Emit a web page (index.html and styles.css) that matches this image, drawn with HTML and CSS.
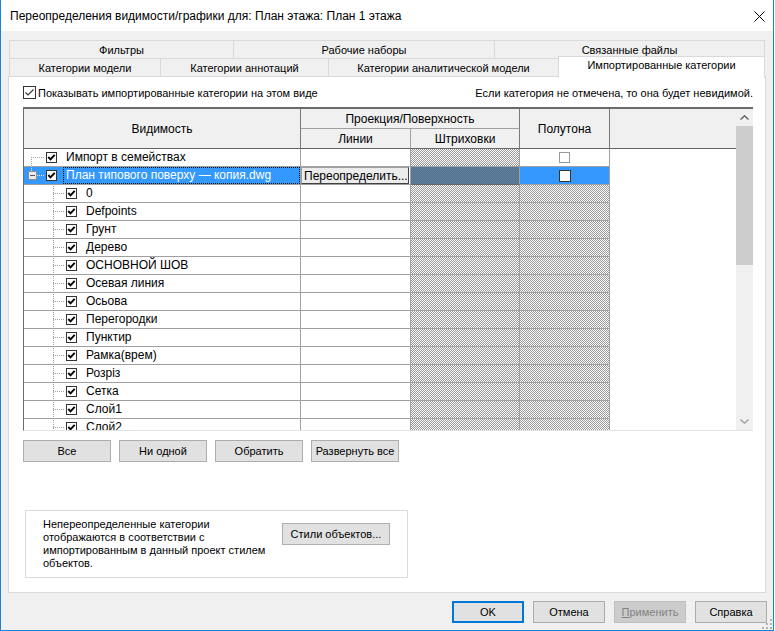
FILE: index.html
```html
<!DOCTYPE html>
<html lang="ru">
<head>
<meta charset="utf-8">
<title>Переопределения видимости/графики</title>
<link rel="stylesheet" href="styles.css">
</head>
<body>
<div class="window">
  <div class="titlebar">
    <span class="title">Переопределения видимости/графики для: План этажа: План 1 этажа</span>
    <span class="close"><svg width="11" height="11" viewBox="0 0 11 11"><path d="M0.5 0.5 L10.5 10.5 M10.5 0.5 L0.5 10.5" stroke="#000" stroke-width="1"/></svg></span>
  </div>
  <div class="client">
    <div class="tabs">
      <div class="tabrow">
        <div class="tab w1">Фильтры</div>
        <div class="tab w2">Рабочие наборы</div>
        <div class="tab w3">Связанные файлы</div>
      </div>
      <div class="tabrow front">
        <div class="tab w4">Категории модели</div>
        <div class="tab w5">Категории аннотаций</div>
        <div class="tab w6">Категории аналитической модели</div>
        <div class="tab w7 sel">Импортированные категории</div>
      </div>
    </div>
    <div class="panel">
      <div class="topline">
        <label class="showlabel"><svg class="chk13" viewBox="0 0 13 13"><rect x="0.5" y="0.5" width="12" height="12" fill="#fff" stroke="#333"/><path d="M2.5 6.5 L5 9 L10.5 3.5" fill="none" stroke="#333" stroke-width="1.1"/></svg><span>Показывать импортированные категории на этом виде</span></label>
        <span>Если категория не отмечена, то она будет невидимой.</span>
      </div>
      <div class="gridwrap">
        <div class="grid">
          <div class="h hvis">Видимость</div>
          <div class="h hproj">Проекция/Поверхность</div>
          <div class="h hhalf">Полутона</div>
          <div class="h hblank"></div>
          <div class="h hlines">Линии</div>
          <div class="h hhatch">Штриховки</div>

          <!-- row 1 -->
          <div class="c vis"><svg class="tree r" viewBox="0 0 22 17"><path d="M7.5 8 V18 M7 8.5 H20" stroke="#a0a0a0" stroke-dasharray="1 1" fill="none"/></svg><svg class="cb" viewBox="0 0 11 11"><rect x="0.5" y="0.5" width="10" height="10" fill="#fff" stroke="#333"/><path d="M2.3 5 L4.5 7.3 L8.7 2.8" fill="none" stroke="#000" stroke-width="1.9"/></svg><span class="lbl">Импорт в семействах</span></div>
          <div class="c"></div>
          <div class="c hatch"></div>
          <div class="c half"><span class="hcb"></span></div>
          <div class="c blank"></div>

          <!-- row 2 selected -->
          <div class="c vis sel"><svg class="tree r" viewBox="0 0 22 17"><path d="M7.5 -1 V4 M13 8.5 H20" stroke="#e6e6e6" stroke-dasharray="1 1" fill="none"/><rect x="4.5" y="4.5" width="8" height="8" fill="#e9e9e9" stroke="#8c8c8c"/><path d="M6 8.5 H11" stroke="#555"/></svg><svg class="cb" viewBox="0 0 11 11"><rect x="0.5" y="0.5" width="10" height="10" fill="#fff" stroke="#333"/><path d="M2.3 5 L4.5 7.3 L8.7 2.8" fill="none" stroke="#000" stroke-width="1.9"/></svg><span class="lbl focus">План типового поверху — копия.dwg</span></div>
          <div class="c ovr"><button class="override">Переопределить...</button></div>
          <div class="c hatch selhatch"></div>
          <div class="c half sel"><span class="hcb big"></span></div>
          <div class="c blank"></div>

          <div class="c vis"><svg class="tree ch" viewBox="0 0 42 17"><path d="M29.5 -1 V18 M29 8.5 H40" stroke="#a0a0a0" stroke-dasharray="1 1" fill="none"/></svg><svg class="cb" viewBox="0 0 11 11"><rect x="0.5" y="0.5" width="10" height="10" fill="#fff" stroke="#333"/><path d="M2.3 5 L4.5 7.3 L8.7 2.8" fill="none" stroke="#000" stroke-width="1.9"/></svg><span class="lbl">0</span></div>
          <div class="c"></div><div class="c hatch"></div><div class="c hatch"></div><div class="c blank"></div>

          <div class="c vis"><svg class="tree ch" viewBox="0 0 42 17"><path d="M29.5 -1 V18 M29 8.5 H40" stroke="#a0a0a0" stroke-dasharray="1 1" fill="none"/></svg><svg class="cb" viewBox="0 0 11 11"><rect x="0.5" y="0.5" width="10" height="10" fill="#fff" stroke="#333"/><path d="M2.3 5 L4.5 7.3 L8.7 2.8" fill="none" stroke="#000" stroke-width="1.9"/></svg><span class="lbl">Defpoints</span></div>
          <div class="c"></div><div class="c hatch"></div><div class="c hatch"></div><div class="c blank"></div>

          <div class="c vis"><svg class="tree ch" viewBox="0 0 42 17"><path d="M29.5 -1 V18 M29 8.5 H40" stroke="#a0a0a0" stroke-dasharray="1 1" fill="none"/></svg><svg class="cb" viewBox="0 0 11 11"><rect x="0.5" y="0.5" width="10" height="10" fill="#fff" stroke="#333"/><path d="M2.3 5 L4.5 7.3 L8.7 2.8" fill="none" stroke="#000" stroke-width="1.9"/></svg><span class="lbl">Грунт</span></div>
          <div class="c"></div><div class="c hatch"></div><div class="c hatch"></div><div class="c blank"></div>

          <div class="c vis"><svg class="tree ch" viewBox="0 0 42 17"><path d="M29.5 -1 V18 M29 8.5 H40" stroke="#a0a0a0" stroke-dasharray="1 1" fill="none"/></svg><svg class="cb" viewBox="0 0 11 11"><rect x="0.5" y="0.5" width="10" height="10" fill="#fff" stroke="#333"/><path d="M2.3 5 L4.5 7.3 L8.7 2.8" fill="none" stroke="#000" stroke-width="1.9"/></svg><span class="lbl">Дерево</span></div>
          <div class="c"></div><div class="c hatch"></div><div class="c hatch"></div><div class="c blank"></div>

          <div class="c vis"><svg class="tree ch" viewBox="0 0 42 17"><path d="M29.5 -1 V18 M29 8.5 H40" stroke="#a0a0a0" stroke-dasharray="1 1" fill="none"/></svg><svg class="cb" viewBox="0 0 11 11"><rect x="0.5" y="0.5" width="10" height="10" fill="#fff" stroke="#333"/><path d="M2.3 5 L4.5 7.3 L8.7 2.8" fill="none" stroke="#000" stroke-width="1.9"/></svg><span class="lbl">ОСНОВНОЙ ШОВ</span></div>
          <div class="c"></div><div class="c hatch"></div><div class="c hatch"></div><div class="c blank"></div>

          <div class="c vis"><svg class="tree ch" viewBox="0 0 42 17"><path d="M29.5 -1 V18 M29 8.5 H40" stroke="#a0a0a0" stroke-dasharray="1 1" fill="none"/></svg><svg class="cb" viewBox="0 0 11 11"><rect x="0.5" y="0.5" width="10" height="10" fill="#fff" stroke="#333"/><path d="M2.3 5 L4.5 7.3 L8.7 2.8" fill="none" stroke="#000" stroke-width="1.9"/></svg><span class="lbl">Осевая линия</span></div>
          <div class="c"></div><div class="c hatch"></div><div class="c hatch"></div><div class="c blank"></div>

          <div class="c vis"><svg class="tree ch" viewBox="0 0 42 17"><path d="M29.5 -1 V18 M29 8.5 H40" stroke="#a0a0a0" stroke-dasharray="1 1" fill="none"/></svg><svg class="cb" viewBox="0 0 11 11"><rect x="0.5" y="0.5" width="10" height="10" fill="#fff" stroke="#333"/><path d="M2.3 5 L4.5 7.3 L8.7 2.8" fill="none" stroke="#000" stroke-width="1.9"/></svg><span class="lbl">Осьова</span></div>
          <div class="c"></div><div class="c hatch"></div><div class="c hatch"></div><div class="c blank"></div>

          <div class="c vis"><svg class="tree ch" viewBox="0 0 42 17"><path d="M29.5 -1 V18 M29 8.5 H40" stroke="#a0a0a0" stroke-dasharray="1 1" fill="none"/></svg><svg class="cb" viewBox="0 0 11 11"><rect x="0.5" y="0.5" width="10" height="10" fill="#fff" stroke="#333"/><path d="M2.3 5 L4.5 7.3 L8.7 2.8" fill="none" stroke="#000" stroke-width="1.9"/></svg><span class="lbl">Перегородки</span></div>
          <div class="c"></div><div class="c hatch"></div><div class="c hatch"></div><div class="c blank"></div>

          <div class="c vis"><svg class="tree ch" viewBox="0 0 42 17"><path d="M29.5 -1 V18 M29 8.5 H40" stroke="#a0a0a0" stroke-dasharray="1 1" fill="none"/></svg><svg class="cb" viewBox="0 0 11 11"><rect x="0.5" y="0.5" width="10" height="10" fill="#fff" stroke="#333"/><path d="M2.3 5 L4.5 7.3 L8.7 2.8" fill="none" stroke="#000" stroke-width="1.9"/></svg><span class="lbl">Пунктир</span></div>
          <div class="c"></div><div class="c hatch"></div><div class="c hatch"></div><div class="c blank"></div>

          <div class="c vis"><svg class="tree ch" viewBox="0 0 42 17"><path d="M29.5 -1 V18 M29 8.5 H40" stroke="#a0a0a0" stroke-dasharray="1 1" fill="none"/></svg><svg class="cb" viewBox="0 0 11 11"><rect x="0.5" y="0.5" width="10" height="10" fill="#fff" stroke="#333"/><path d="M2.3 5 L4.5 7.3 L8.7 2.8" fill="none" stroke="#000" stroke-width="1.9"/></svg><span class="lbl">Рамка(врем)</span></div>
          <div class="c"></div><div class="c hatch"></div><div class="c hatch"></div><div class="c blank"></div>

          <div class="c vis"><svg class="tree ch" viewBox="0 0 42 17"><path d="M29.5 -1 V18 M29 8.5 H40" stroke="#a0a0a0" stroke-dasharray="1 1" fill="none"/></svg><svg class="cb" viewBox="0 0 11 11"><rect x="0.5" y="0.5" width="10" height="10" fill="#fff" stroke="#333"/><path d="M2.3 5 L4.5 7.3 L8.7 2.8" fill="none" stroke="#000" stroke-width="1.9"/></svg><span class="lbl">Розріз</span></div>
          <div class="c"></div><div class="c hatch"></div><div class="c hatch"></div><div class="c blank"></div>

          <div class="c vis"><svg class="tree ch" viewBox="0 0 42 17"><path d="M29.5 -1 V18 M29 8.5 H40" stroke="#a0a0a0" stroke-dasharray="1 1" fill="none"/></svg><svg class="cb" viewBox="0 0 11 11"><rect x="0.5" y="0.5" width="10" height="10" fill="#fff" stroke="#333"/><path d="M2.3 5 L4.5 7.3 L8.7 2.8" fill="none" stroke="#000" stroke-width="1.9"/></svg><span class="lbl">Сетка</span></div>
          <div class="c"></div><div class="c hatch"></div><div class="c hatch"></div><div class="c blank"></div>

          <div class="c vis"><svg class="tree ch" viewBox="0 0 42 17"><path d="M29.5 -1 V18 M29 8.5 H40" stroke="#a0a0a0" stroke-dasharray="1 1" fill="none"/></svg><svg class="cb" viewBox="0 0 11 11"><rect x="0.5" y="0.5" width="10" height="10" fill="#fff" stroke="#333"/><path d="M2.3 5 L4.5 7.3 L8.7 2.8" fill="none" stroke="#000" stroke-width="1.9"/></svg><span class="lbl">Слой1</span></div>
          <div class="c"></div><div class="c hatch"></div><div class="c hatch"></div><div class="c blank"></div>

          <div class="c vis"><svg class="tree ch" viewBox="0 0 42 17"><path d="M29.5 -1 V18 M29 8.5 H40" stroke="#a0a0a0" stroke-dasharray="1 1" fill="none"/></svg><svg class="cb" viewBox="0 0 11 11"><rect x="0.5" y="0.5" width="10" height="10" fill="#fff" stroke="#333"/><path d="M2.3 5 L4.5 7.3 L8.7 2.8" fill="none" stroke="#000" stroke-width="1.9"/></svg><span class="lbl">Слой2</span></div>
          <div class="c"></div><div class="c hatch"></div><div class="c hatch"></div><div class="c blank"></div>
        </div>
        <div class="vscroll">
          <div class="sarrow"><svg width="9" height="5" viewBox="0 0 9 5"><path d="M0.5 4.5 L4.5 0.8 L8.5 4.5" fill="none" stroke="#606060" stroke-width="1.4"/></svg></div>
          <div class="strack"><div class="thumb"></div></div>
          <div class="sarrow"><svg width="9" height="5" viewBox="0 0 9 5"><path d="M0.5 0.5 L4.5 4.2 L8.5 0.5" fill="none" stroke="#a0a0a0" stroke-width="1.4"/></svg></div>
        </div>
      </div>
      <div class="btnrow">
        <button class="btn b88">Все</button>
        <button class="btn b88">Ни одной</button>
        <button class="btn b88">Обратить</button>
        <button class="btn b88">Развернуть все</button>
      </div>
      <div class="groupbox">
        <div class="gtext">Непереопределенные категории<br>отображаются в соответствии с<br>импортированным в данный проект стилем<br>объектов.</div>
        <button class="btn bstyles">Стили объектов...</button>
      </div>
    </div>
    <div class="footer">
      <button class="btn fb ok">OK</button>
      <button class="btn fb">Отмена</button>
      <button class="btn fb disabled"><span><u>П</u>рименить</span></button>
      <button class="btn fb">Справка</button>
    </div>
  </div>
  <svg class="grip" width="10" height="10" viewBox="0 0 10 10"><g fill="#b4b4b4"><rect x="8" y="0" width="2" height="2"/><rect x="4" y="4" width="2" height="2"/><rect x="8" y="4" width="2" height="2"/><rect x="0" y="8" width="2" height="2"/><rect x="4" y="8" width="2" height="2"/><rect x="8" y="8" width="2" height="2"/></g></svg>
</div>
</body>
</html>
```

FILE: styles.css
```css
* { box-sizing: border-box; }
html, body { margin: 0; padding: 0; background: #fff; }
body {
  font-family: "Liberation Sans", Arial, sans-serif;
  font-size: 11px;
  color: #000;
}
.window {
  width: 774px;
  height: 631px;
  border: 1px solid #1883d7;
  border-top: none;
  display: flex;
  flex-direction: column;
  position: relative;
}
.titlebar {
  height: 31px;
  flex: none;
  background: #fff;
  display: flex;
  align-items: center;
  justify-content: space-between;
  padding: 1px 0 0 9px;
}
.title { font-size: 12px; }
.close {
  width: 28px;
  height: 30px;
  display: flex;
  align-items: center;
  justify-content: center;
}
.client {
  flex: 1;
  background: #f0f0f0;
  padding: 9px 7px 0 7px;
}
.tabs { margin: 0 1px; }
.tabrow { display: flex; align-items: flex-start; }
.tabrow.front { margin-top: -1px; }
.tab {
  height: 19px;
  border: 1px solid #d9d9d9;
  background: #f0f0f0;
  text-align: center;
  line-height: 17px;
  white-space: nowrap;
  padding-top: 1px;
}
.tab + .tab { margin-left: -1px; }
.w1 { width: 225px; }
.w2 { width: 262px; }
.w3 { width: 271px; }
.w4 { width: 152px; }
.w5 { width: 169px; }
.w6 { width: 231px; }
.w7 { width: 207px; }
.tab.sel {
  background: #fff;
  height: 22px;
  margin-top: -2px;
  margin-bottom: -1px;
  border-bottom: none;
  position: relative;
  z-index: 1;
  padding-top: 0;
}
.panel {
  margin-top: -1px;
  height: 517px;
  background: #fff;
  border: 1px solid #d9d9d9;
  padding: 9px 12px 0 14px;
}
.topline {
  display: flex;
  align-items: center;
  justify-content: space-between;
  height: 13px;
}
.showlabel { display: flex; align-items: center; gap: 2px; }
.chk13 { width: 13px; height: 13px; display: block; }

.gridwrap {
  margin-top: 8px;
  height: 324px;
  border-top: 2px solid #6a6a6a;
  border-left: 1px solid #6a6a6a;
  border-bottom: 1px solid #e3e3e3;
  display: flex;
  overflow: hidden;
}
.grid {
  width: 712px;
  flex: none;
  font-size: 12px;
  display: grid;
  grid-template-columns: 277px 110px 109px 90px 126px;
  grid-template-rows: 20px 20px;
  grid-auto-rows: 18px;
  align-content: start;
  overflow: hidden;
}
.h {
  background: #f0f0f0;
  display: flex;
  align-items: center;
  justify-content: center;
  white-space: nowrap;
}
.hvis { grid-column: 1; grid-row: 1 / span 2; border-right: 1px solid #7a7a7a; border-bottom: 1px solid #646464; }
.hproj { grid-column: 2 / span 2; grid-row: 1; border-right: 1px solid #7a7a7a; border-bottom: 1px solid #a0a0a0; }
.hhalf { grid-column: 4; grid-row: 1 / span 2; border-right: 1px solid #7a7a7a; border-bottom: 1px solid #646464; }
.hblank { grid-column: 5; grid-row: 1 / span 2; border-bottom: 1px solid #646464; }
.hlines { grid-column: 2; grid-row: 2; border-right: 1px solid #a0a0a0; border-bottom: 1px solid #646464; }
.hhatch { grid-column: 3; grid-row: 2; border-right: 1px solid #7a7a7a; border-bottom: 1px solid #646464; }

.c {
  border-right: 1px solid #a0a0a0;
  border-bottom: 1px solid #a0a0a0;
  background: #fff;
  min-width: 0;
}
.c.blank { border: none; }
.c.hatch {
  background: repeating-conic-gradient(#979797 0 25%, #fff 0 50%) 0 0 / 2px 2px;
}
.c.selhatch {
  background: repeating-conic-gradient(#6a6a6a 0 25%, #4a88c4 0 50%) 0 0 / 2px 2px;
  border-bottom-color: #666;
}
.c.vis {
  display: flex;
  align-items: center;
  white-space: nowrap;
}
.c.sel { background: #3399ff; color: #fff; }
.tree { display: block; height: 17px; overflow: visible; flex: none; }
.tree.r { width: 22px; }
.tree.ch { width: 42px; }
.cb { display: block; width: 11px; height: 11px; flex: none; }
.lbl {
  margin-left: 6px;
  padding-left: 2px;
  border: 1px solid transparent;
  height: 17px;
  line-height: 15px;
}
.lbl.focus { border: 1px dotted #000; flex: 1; }
.c.half { display: flex; align-items: center; justify-content: center; }
.hcb {
  display: block;
  width: 11px;
  height: 11px;
  border: 1px solid #9a9a9a;
  background: #fff;
}
.hcb.big { width: 12px; height: 12px; border-color: #333; }
.c.ovr { padding: 0; }
.override {
  display: block;
  width: 108px;
  height: 17px;
  margin: 0;
  padding: 0 0 0 2px;
  font: inherit;
  color: #000;
  text-align: left;
  background: #ececec;
  border: 1px solid;
  border-color: #a0a0a0 #404040 #404040 #a0a0a0;
  white-space: nowrap;
  overflow: hidden;
}

.vscroll {
  width: 17px;
  flex: none;
  background: #f0f0f0;
  display: flex;
  flex-direction: column;
}
.sarrow {
  height: 17px;
  flex: none;
  display: flex;
  align-items: center;
  justify-content: center;
}
.strack { flex: 1; }
.thumb { height: 139px; background: #cdcdcd; }

.btn {
  margin: 0;
  padding: 0;
  font: inherit;
  color: #000;
  height: 22px;
  background: #e1e1e1;
  border: 1px solid #adadad;
  display: flex;
  align-items: center;
  justify-content: center;
  white-space: nowrap;
}
.btnrow {
  margin-top: 9px;
  display: flex;
  gap: 8px;
}
.b88 { width: 88px; }
.groupbox {
  margin: 48px 0 0 2px;
  width: 383px;
  height: 68px;
  border: 1px solid #dcdcdc;
  padding-left: 17px;
  display: flex;
  align-items: flex-start;
}
.gtext {
  width: 239px;
  margin-top: 7px;
  line-height: 13px;
  white-space: nowrap;
}
.bstyles { width: 108px; margin-top: 12px; }
.footer {
  margin: 8px -1px 0 0;
  display: flex;
  justify-content: flex-end;
  gap: 9px;
}
.fb { width: 72px; }
.fb.ok { border: 2px solid #0078d7; }
.fb.disabled { background: #cccccc; border-color: #bfbfbf; color: #838383; }
.grip { position: absolute; right: 1px; bottom: 1px; }
```
